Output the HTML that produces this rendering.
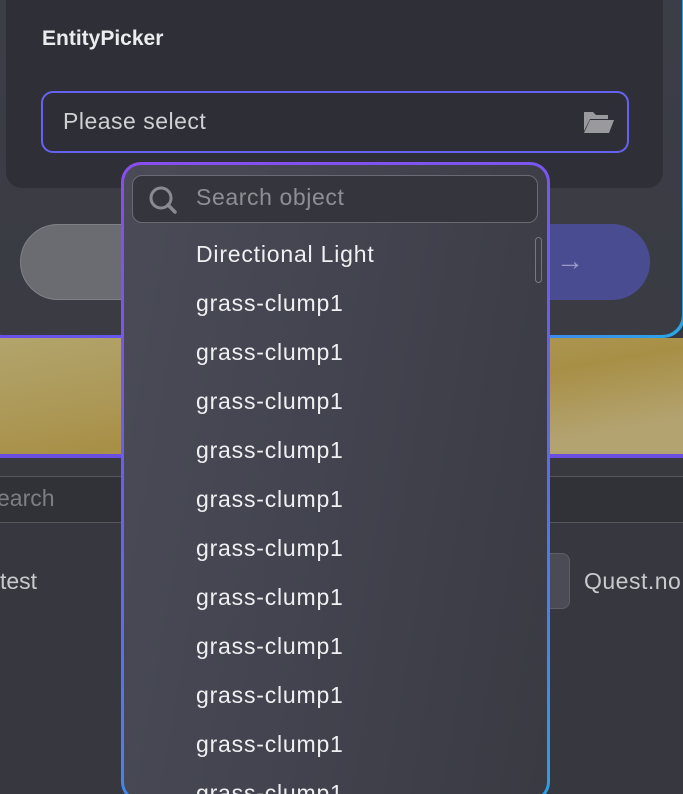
<!DOCTYPE html>
<html style="overflow:hidden;height:794px"><head><style>
*{margin:0;padding:0;box-sizing:border-box}
body{width:683px;height:794px;overflow:hidden;background:#37383f;font-family:"Liberation Sans",sans-serif;position:relative}
.abs{position:absolute}
</style></head><body>
<div class="abs" style="left:-20px;top:-20px;width:705px;height:358px;border-radius:0 0 22px 22px;padding:0 3px 3px 3px;background:linear-gradient(90deg,#6a4ee8,#5a6ef0 60%,#2aa6e6)">
 <div style="width:100%;height:100%;border-radius:0 0 20px 20px;background:linear-gradient(180deg,#3c3e47,#3a3b43)"></div>
</div>
<div class="abs" style="left:6px;top:-10px;width:657px;height:198px;border-radius:0 0 16px 16px;background:#2f3037"></div>
<div class="abs" style="left:42px;top:27px;color:#ececef;font-weight:bold;font-size:21px">EntityPicker</div>
<div class="abs" style="left:41px;top:91px;width:588px;height:62px;border:2px solid #6662f0;border-radius:12px;background:#2e2f36"></div>
<div class="abs" style="left:63px;top:108px;color:#d0d0d4;font-size:23px;letter-spacing:0.5px">Please select</div>
<svg class="abs" style="left:583px;top:109px" width="32" height="26" viewBox="0 0 32 26"><path d="M1 3h9l3 3h12v4H7L1 22z" fill="#9a9a9e"/><path d="M7 11h24l-5 13H1z" fill="#9a9a9e"/></svg>
<div class="abs" style="left:20px;top:224px;width:320px;height:76px;border-radius:38px;background:#6b6c72;border:1px solid #808188"></div>
<div class="abs" style="left:340px;top:224px;width:310px;height:76px;border-radius:38px;background:#4a4c92"></div>
<div class="abs" style="left:556px;top:245px;color:#9a9ac8;font-size:28px">→</div>
<div class="abs" style="left:0;top:338px;width:683px;height:116px;background:linear-gradient(170deg,#b2a46c 0%,#ad9a5a 30%,#a88f46 55%,#b3a370 85%)"></div>
<div class="abs" style="left:0;top:454px;width:683px;height:4px;background:#6a4ee0"></div>
<div class="abs" style="left:0;top:458px;width:683px;height:18px;background:#38393f"></div>
<div class="abs" style="left:0;top:476px;width:683px;height:47px;background:#313238;border-top:1px solid #55565c;border-bottom:1px solid #55565c"></div>
<div class="abs" style="left:-3px;top:485px;color:#7d7e84;font-size:23px">earch</div>
<div class="abs" style="left:0;top:568px;color:#c9c9cc;font-size:23px">test</div>
<div class="abs" style="left:540px;top:553px;width:30px;height:56px;border-radius:8px;background:#4a4b54;border:1px solid #5d5e66"></div>
<div class="abs" style="left:584px;top:568px;color:#c9c9cc;font-size:23px;letter-spacing:0.5px">Quest.no</div>
<div class="abs" style="left:121px;top:162px;width:429px;height:640px;border-radius:20px;padding:3px;background:linear-gradient(160deg,#8a4ef0,#6a5ef0 40%,#5a6ef0 60%,#2aa0e8 100%)">
 <div style="width:100%;height:100%;border-radius:17px;background:linear-gradient(100deg,#4a4b56 0%,#42434e 50%,#393a42 100%)"></div>
</div>
<div class="abs" style="left:132px;top:175px;width:406px;height:48px;border:1.5px solid #6a6b72;border-radius:10px;background:#35363d"></div>
<svg class="abs" style="left:147px;top:184px" width="32" height="32" viewBox="0 0 32 32"><circle cx="14" cy="14" r="10" stroke="#8a8b90" stroke-width="3" fill="none"/><path d="M21 21l7 7" stroke="#8a8b90" stroke-width="3.5" stroke-linecap="round"/></svg>
<div class="abs" style="left:196px;top:184px;color:#8e8f94;font-size:23px;letter-spacing:0.6px">Search object</div>
<div class="abs" style="left:535px;top:237px;width:7px;height:46px;border:1.5px solid #77787e;border-radius:4px"></div>
<div class="abs" style="left:196px;top:240px;color:#f0f0f2;font-size:23px;line-height:29px;letter-spacing:0.8px;height:554px;overflow:hidden">
<div style="height:49px">Directional Light</div>
<div style="height:49px">grass-clump1</div>
<div style="height:49px">grass-clump1</div>
<div style="height:49px">grass-clump1</div>
<div style="height:49px">grass-clump1</div>
<div style="height:49px">grass-clump1</div>
<div style="height:49px">grass-clump1</div>
<div style="height:49px">grass-clump1</div>
<div style="height:49px">grass-clump1</div>
<div style="height:49px">grass-clump1</div>
<div style="height:49px">grass-clump1</div>
<div style="height:49px">grass-clump1</div>
</div>
</body></html>
